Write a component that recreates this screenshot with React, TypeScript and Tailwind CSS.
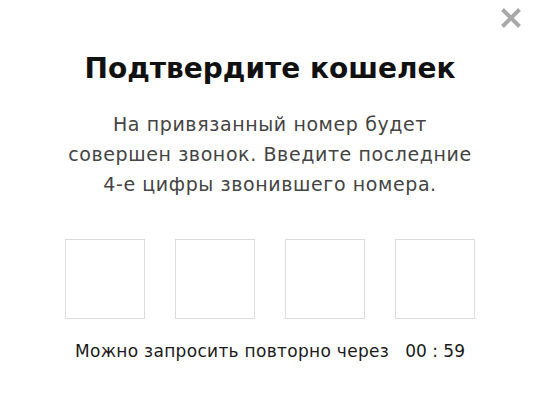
import React from 'react';

const CloseIcon = () => (
  <svg width="22" height="22" viewBox="0 0 22 22" fill="none">
    <path d="M2.5 2.5L19.5 19.5M19.5 2.5L2.5 19.5" stroke="#a9a9a9" strokeWidth="4" strokeLinecap="butt" />
  </svg>
);

const App: React.FC = () => {
  const digits = [0, 1, 2, 3];

  return (
    <div
      className="relative w-[540px] h-[401px] bg-white flex flex-col items-center"
      style={{ fontFamily: '"DejaVu Sans", "Noto Sans", sans-serif' }}
    >
      <button className="absolute top-[7px] right-[18px] p-0">
        <CloseIcon />
      </button>

      <h2 className="mt-[49px] text-[28px] leading-[40px] font-bold text-[#111]">
        Подтвердите кошелек
      </h2>

      <p className="mt-[20px] text-[19px] leading-[30px] tracking-[0.6px] text-[#444] text-center">
        На привязанный номер будет
        <br />
        совершен звонок. Введите последние
        <br />
        4-е цифры звонившего номера.
      </p>

      <div className="mt-[40px] flex gap-[30px]">
        {digits.map((d) => (
          <input
            key={d}
            maxLength={1}
            className="w-[80px] h-[80px] border border-[#dcdcdc] text-center text-[28px] outline-none"
          />
        ))}
      </div>

      <div className="mt-[20px] text-[17px] leading-[24px] text-[#1a1a1a] flex gap-[16px]">
        <span className="tracking-[0.3px]">Можно запросить повторно через</span>
        <span>00 : 59</span>
      </div>
    </div>
  );
};

export default App;
